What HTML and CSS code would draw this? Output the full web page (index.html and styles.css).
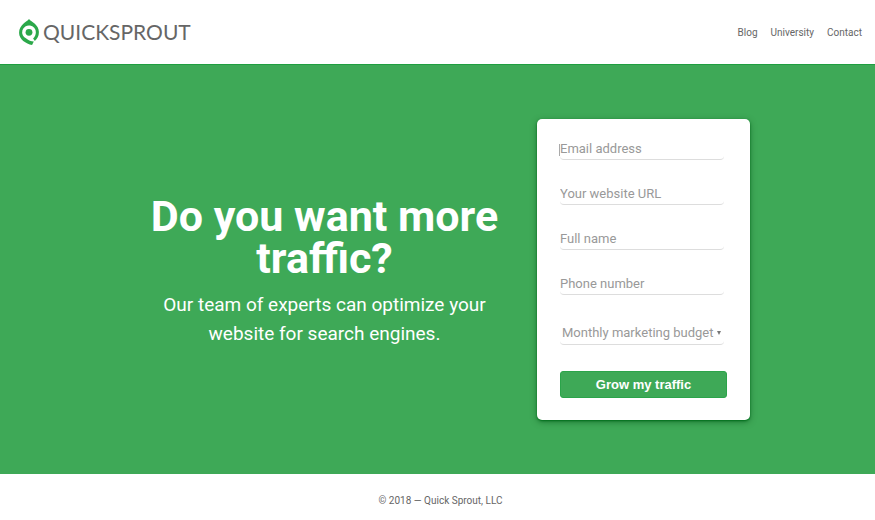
FILE: index.html
```
<!DOCTYPE html>
<html lang="en">
<head>
  <meta charset="UTF-8">
  <meta name="viewport" content="width=device-width, initial-scale=1">
  <title>Quick Sprout</title>
  <link rel="stylesheet" href="styles.css">
</head>
<body>
  <header class="header">
    <a class="logo" href="#">
      <svg class="logo-icon" viewBox="0 0 58 76" aria-hidden="true">
        <path d="M29 0C36 9 58 16 58 38C58 50 53 59 46 64L41 57C46 53 49 46 49 39A20 20 0 1 0 21 57C28 63 35 65 43 66L38 76C20 72 0 60 0 40C0 17 22 9 29 0Z" fill="#2ba84a"/>
        <circle cx="29" cy="39" r="10" fill="#2ba84a"/>
      </svg>
      <span class="logo-text">QUICKSPROUT</span>
    </a>
    <nav class="nav">
      <a href="#">Blog</a>
      <a href="#">University</a>
      <a href="#">Contact</a>
    </nav>
  </header>

  <main class="hero">
    <div class="hero-inner">
      <div class="hero-text">
        <h1>Do you want more traffic?</h1>
        <p>Our team of experts can optimize your website for search engines.</p>
      </div>

      <form class="card">
        <div class="field focused">
          <input type="email" name="email" placeholder="Email address" aria-label="Email address">
        </div>
        <div class="field">
          <input type="text" name="url" placeholder="Your website URL" aria-label="Your website URL">
        </div>
        <div class="field">
          <input type="text" name="name" placeholder="Full name" aria-label="Full name">
        </div>
        <div class="field">
          <input type="tel" name="phone" placeholder="Phone number" aria-label="Phone number">
        </div>
        <div class="field select-field">
          <select name="budget" aria-label="Monthly marketing budget">
            <option>Monthly marketing budget</option>
          </select>
        </div>
        <button type="submit">Grow my traffic</button>
      </form>
    </div>
  </main>

  <footer class="footer">© 2018 — Quick Sprout, LLC</footer>
</body>
</html>
```

FILE: styles.css
```
* {
  box-sizing: border-box;
}
body {
  margin: 0;
  min-height: 100vh;
  display: flex;
  flex-direction: column;
  font-family: Roboto, sans-serif;
  font-size: 10px;
  color: #666;
  background: #fff;
}
a {
  color: inherit;
  text-decoration: none;
}
.header {
  display: flex;
  align-items: center;
  justify-content: space-between;
  padding: 18px 13px 18px 19px;
}
.logo {
  display: flex;
  align-items: center;
  gap: 4px;
}
.logo-icon {
  width: 20px;
  height: 26px;
}
.logo-text {
  font-family: Lato, sans-serif;
  font-size: 21px;
  line-height: 28px;
}
.nav {
  display: flex;
  gap: 13px;
}
.hero {
  flex: 1;
  display: flex;
  align-items: center;
  justify-content: center;
  padding: 54px 24px;
  background: #3ea957;
  border-top: 1px solid #1f9e40;
}
.hero-inner {
  display: flex;
  align-items: center;
  gap: 13px;
  width: 100%;
  max-width: 625px;
}
.hero-text {
  flex: 1;
  padding-top: 3px;
  color: #fff;
  text-align: center;
}
h1 {
  margin: 0 0 11px;
  font-size: 43px;
  line-height: 42px;
  font-weight: 700;
}
.hero-text p {
  margin: 0;
  padding: 0 24px;
  font-size: 19px;
  line-height: 29px;
}
.card {
  width: 213px;
  padding: 17px 23px 22px;
  background: #fff;
  border-radius: 5px;
  box-shadow: 0 1px 2px #00701c, 0 2px 6px rgba(0, 70, 20, 0.5);
}
.field {
  position: relative;
  width: 164px;
  margin-bottom: 21px;
}
.field input,
.field select {
  display: block;
  width: 100%;
  height: 24px;
  padding: 2px 0 0;
  border: 0;
  border-bottom: 1px solid #ddd;
  border-radius: 4px;
  background: transparent;
  font-family: Roboto, sans-serif;
  font-size: 13px;
  color: #999;
  outline: none;
}
.field input::placeholder {
  color: #999;
  opacity: 1;
}
/* text caret in the first field */
.focused::before {
  content: "";
  position: absolute;
  left: -1px;
  top: 8px;
  width: 1px;
  height: 12px;
  background: #aaa;
}
.select-field {
  margin: 26px 0;
}
.field select {
  appearance: none;
  padding: 0 0 1px 2px;
}
.select-field::after {
  content: "";
  position: absolute;
  right: 3px;
  top: 10px;
  border: 2px solid transparent;
  border-top: 4px solid #777;
  border-bottom: 0;
}
button {
  display: block;
  width: 100%;
  height: 27px;
  padding: 0;
  border: 1px solid #2ba44a;
  border-radius: 3px;
  background: #3ea957;
  color: #fff;
  font-family: "Liberation Sans", Arial, sans-serif;
  font-size: 13px;
  font-weight: 700;
}
.footer {
  padding: 20px 0 12px 6px;
  line-height: 14px;
  text-align: center;
}
```
